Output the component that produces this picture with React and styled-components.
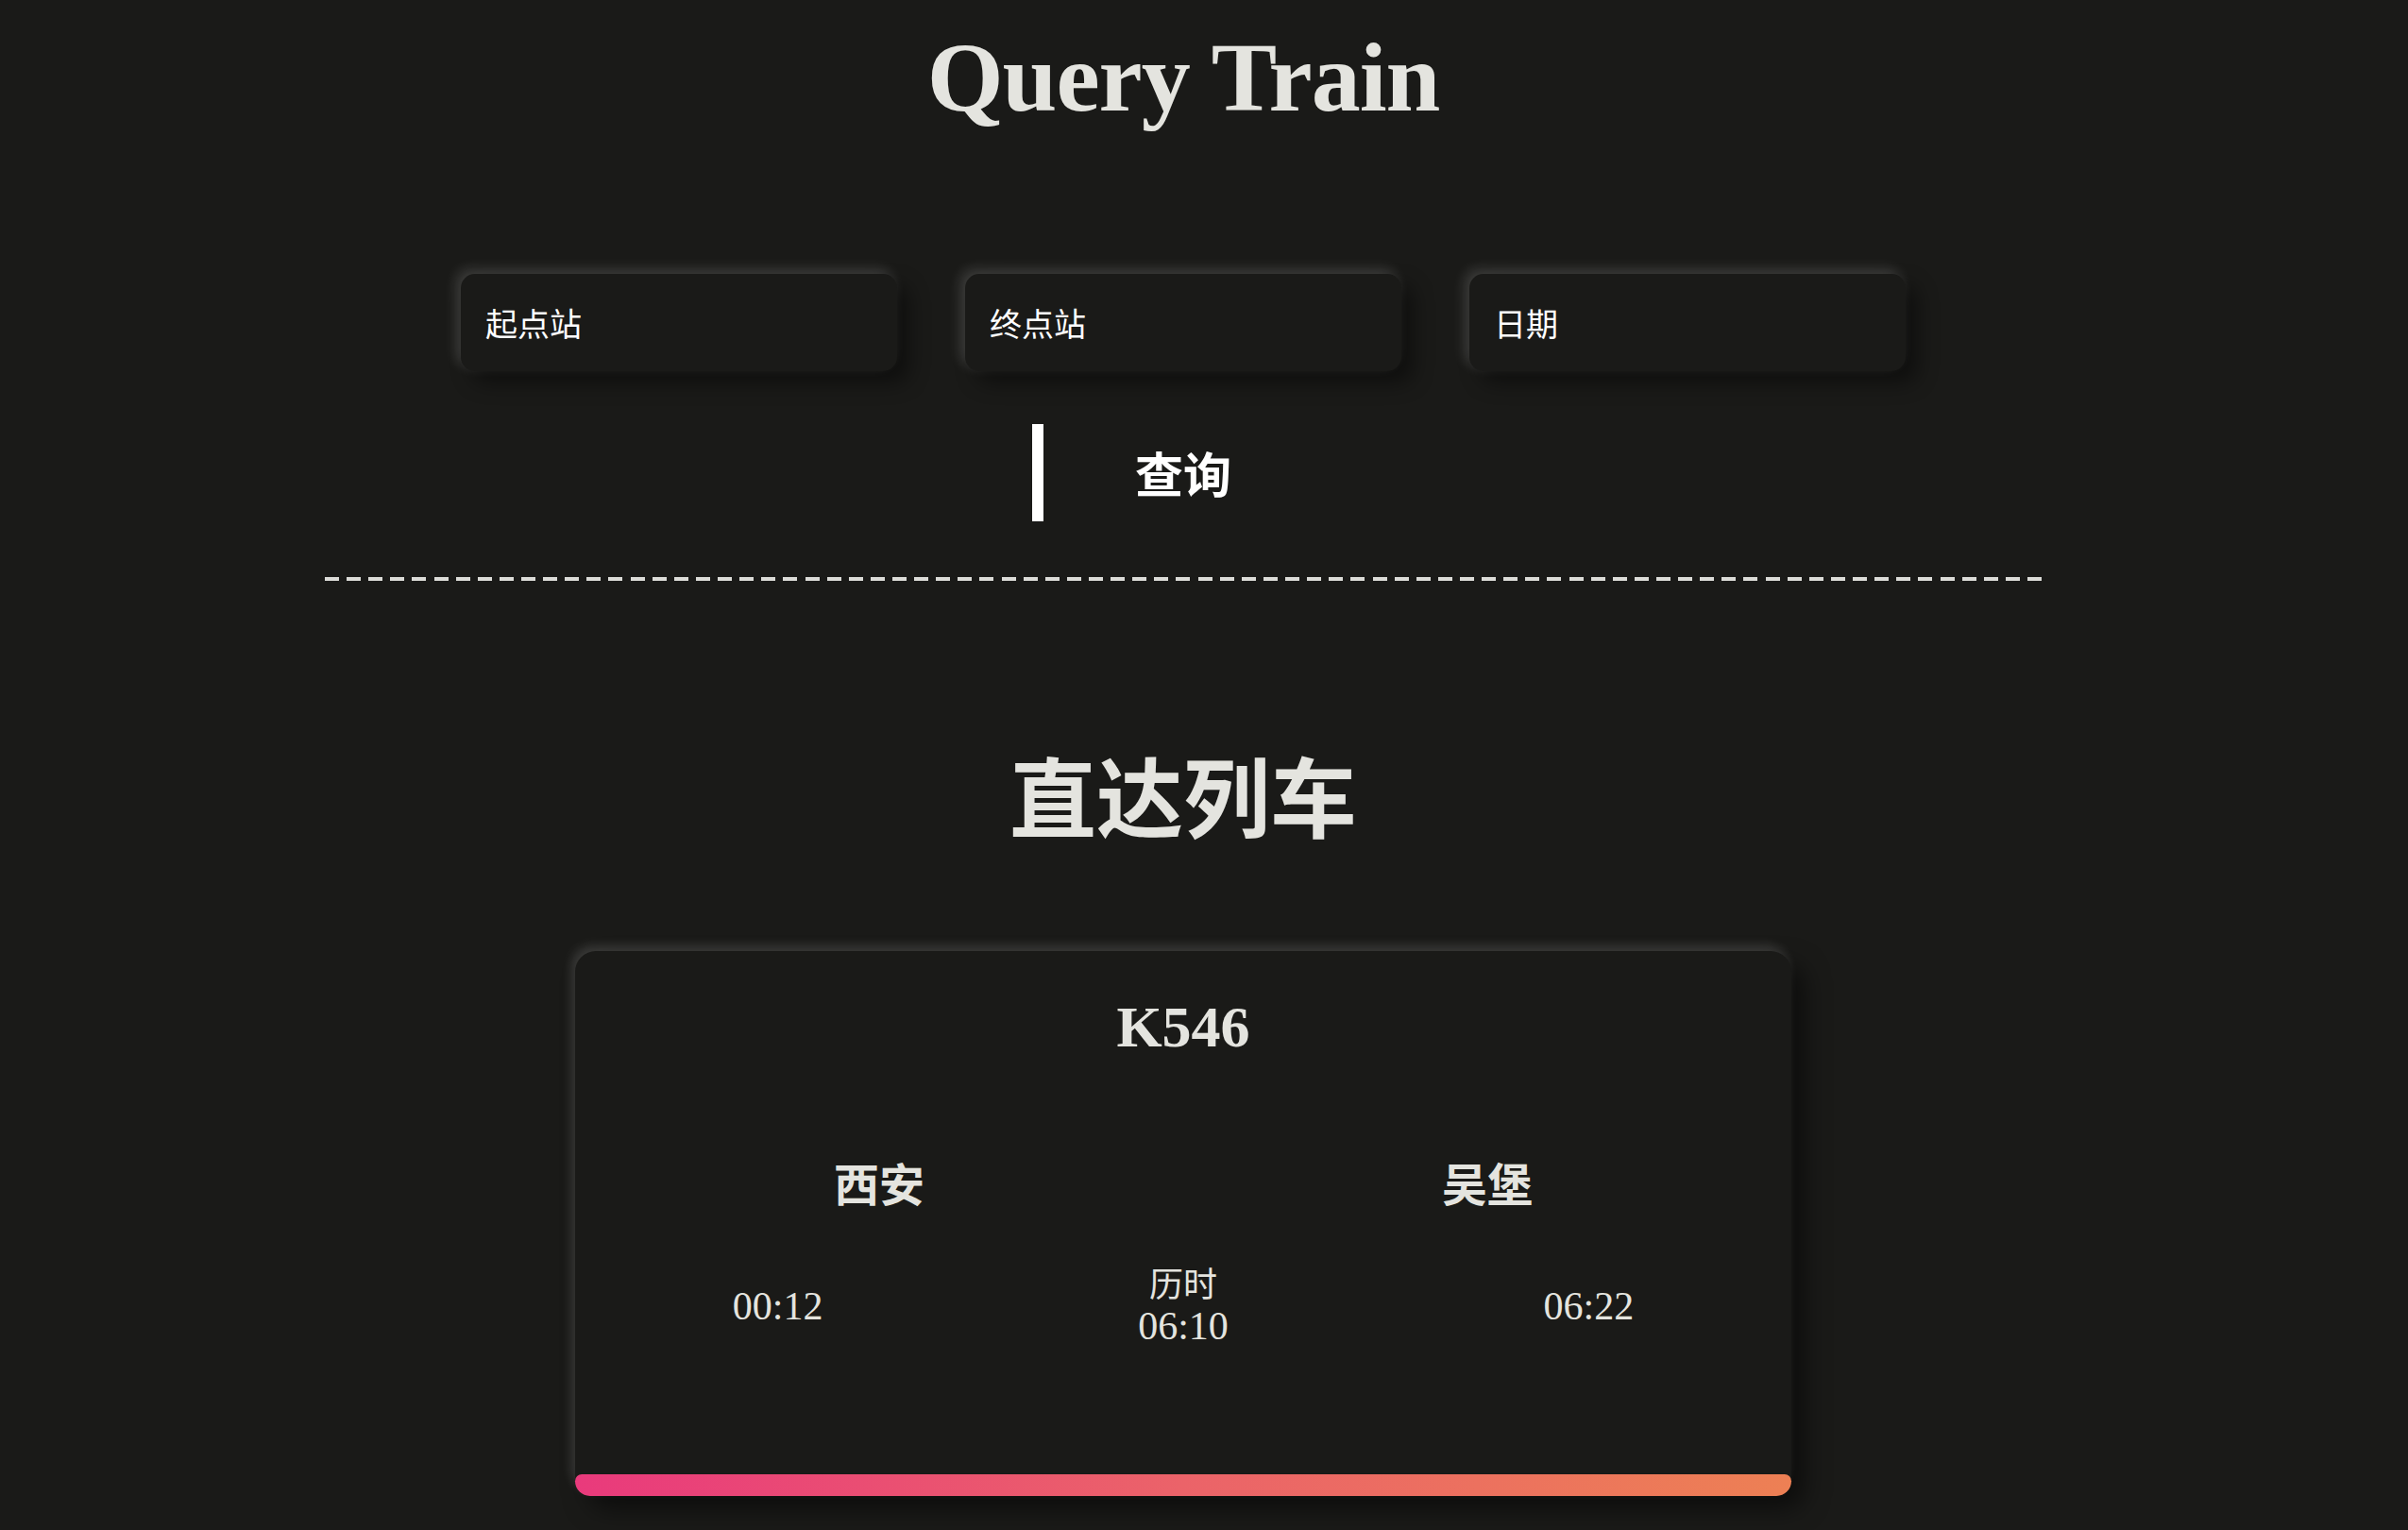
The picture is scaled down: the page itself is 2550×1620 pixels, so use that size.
import React from "react";
import styled, { createGlobalStyle } from "styled-components";

const GlobalStyle = createGlobalStyle`
  html, body {
    margin: 0;
    padding: 0;
    background: #1a1a18;
  }
  * {
    box-sizing: border-box;
  }
`;

const serif = `"Liberation Serif", "Noto Sans CJK SC", serif`;
const sans = `"Noto Sans CJK SC", "Noto Sans", sans-serif`;

const Page = styled.div`
  display: flex;
  flex-direction: column;
  align-items: center;
  padding: 20px 44px 80px 0;
  min-height: 100vh;
  background: #1a1a18;
  color: #e4e4df;
`;

const Title = styled.h1`
  margin: 0;
  font-family: ${serif};
  font-weight: 700;
  font-size: 104px;
  line-height: 1.2;
  letter-spacing: -1px;
  color: #e4e4df;
`;

const Form = styled.div`
  display: flex;
  gap: 72px;
  margin-top: 145px;
`;

const Field = styled.input`
  width: 462px;
  height: 103px;
  padding: 0 26px;
  border: none;
  outline: none;
  border-radius: 15px;
  background: #1a1a18;
  color: #fff;
  font-family: ${sans};
  font-size: 34px;
  box-shadow: -5px -5px 14px rgba(255, 255, 255, 0.16),
    12px 12px 22px rgba(0, 0, 0, 0.45);

  &::placeholder {
    color: #fff;
    opacity: 1;
  }
`;

const QueryButton = styled.button`
  width: 320px;
  height: 103px;
  margin-top: 56px;
  padding: 0 12px 0 0;
  border: none;
  border-left: 12px solid #fff;
  background: transparent;
  color: #fff;
  font-family: ${serif};
  font-weight: 700;
  font-size: 51px;
  cursor: pointer;
`;

const Divider = styled.div`
  width: 1818px;
  height: 4px;
  margin-top: 59px;
  background: repeating-linear-gradient(
    to right,
    #dcdcd8 0 15px,
    transparent 15px 23.115px
  );
`;

const Heading = styled.h2`
  margin: 170px 0 0;
  font-family: ${sans};
  font-weight: 700;
  font-size: 92px;
  line-height: 1.2;
  color: #e4e4df;
`;

const Card = styled.div`
  display: flex;
  flex-direction: column;
  width: 1288px;
  height: 577px;
  margin-top: 112px;
  padding-top: 43px;
  border-radius: 22px;
  background: #1a1a18;
  box-shadow: -4px -6px 12px rgba(255, 255, 255, 0.14),
    14px 14px 26px rgba(0, 0, 0, 0.5);
`;

const TrainNo = styled.div`
  font-family: ${serif};
  font-weight: 700;
  font-size: 62px;
  line-height: 1.2;
  text-align: center;
  color: #e4e4df;
`;

const StationRow = styled.div`
  display: grid;
  grid-template-columns: 1fr 1fr;
  margin-top: 98px;
`;

const Station = styled.div`
  font-family: ${sans};
  font-weight: 700;
  font-size: 48px;
  line-height: 1.2;
  text-align: center;
  color: #e4e4df;
`;

const TimeRow = styled.div`
  display: grid;
  grid-template-columns: repeat(3, 1fr);
  align-items: center;
  margin-top: 56px;
`;

const Time = styled.div`
  font-family: ${serif};
  font-size: 42px;
  line-height: 1.2;
  text-align: center;
  color: #e4e4df;
`;

const Duration = styled.div`
  display: flex;
  flex-direction: column;
  align-items: center;
`;

const DurationLabel = styled.div`
  font-family: ${sans};
  font-size: 36px;
  line-height: 1.2;
  color: #e4e4df;
`;

const Bar = styled.div`
  height: 23px;
  margin-top: auto;
  border-radius: 10px 10px 22px 22px;
  background: linear-gradient(90deg, #e93a7c 0%, #eb6369 50%, #ed8054 100%);
`;

const train = {
  no: "K546",
  from: "西安",
  to: "吴堡",
  start: "00:12",
  end: "06:22",
  duration: "06:10",
};

export default function App() {
  return (
    <>
      <GlobalStyle />
      <Page>
        <Title>Query Train</Title>
        <Form>
          <Field placeholder="起点站" />
          <Field placeholder="终点站" />
          <Field placeholder="日期" />
        </Form>
        <QueryButton>查询</QueryButton>
        <Divider />
        <Heading>直达列车</Heading>
        <Card>
          <TrainNo>{train.no}</TrainNo>
          <StationRow>
            <Station>{train.from}</Station>
            <Station>{train.to}</Station>
          </StationRow>
          <TimeRow>
            <Time>{train.start}</Time>
            <Duration>
              <DurationLabel>历时</DurationLabel>
              <Time>{train.duration}</Time>
            </Duration>
            <Time>{train.end}</Time>
          </TimeRow>
          <Bar />
        </Card>
      </Page>
    </>
  );
}
